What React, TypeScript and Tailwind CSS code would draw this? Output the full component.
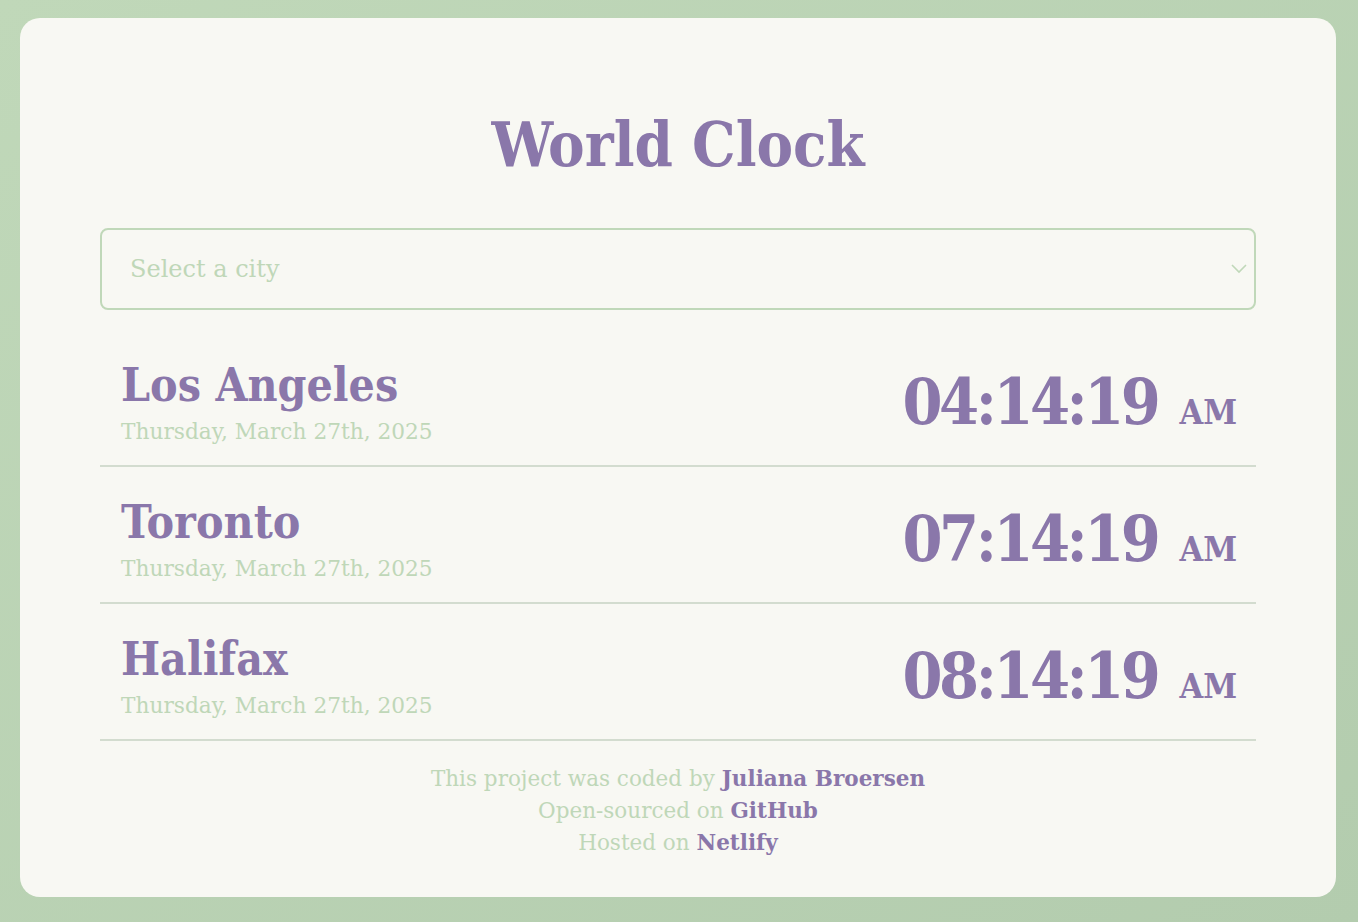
const cities = [
  { name: "Los Angeles", date: "Thursday, March 27th, 2025", time: "04:14:19" },
  { name: "Toronto", date: "Thursday, March 27th, 2025", time: "07:14:19" },
  { name: "Halifax", date: "Thursday, March 27th, 2025", time: "08:14:19" },
];

const slab = { fontFamily: '"DejaVu Serif Condensed", "DejaVu Serif", serif' };
const body = { fontFamily: '"DejaVu Serif", serif' };

export default function App() {
  return (
    <div className="min-h-screen w-full bg-gradient-to-br from-[#c0d8b9] to-[#b3ccae] pl-[20px] pr-[22px] pt-[18px] pb-[25px]">
      <div className="bg-[#f8f8f3] rounded-[20px] px-[80px] pt-[87px] pb-[38px]">
        <h1
          className="text-center text-[#8a77aa] font-bold text-[61px] leading-[80px] mb-[43px]"
          style={slab}
        >
          World Clock
        </h1>
        <div className="relative h-[82px] border-2 border-[#c0d8b9] rounded-[8px] flex items-center px-[28px]">
          <span className="text-[#bfd7b8] text-[24px]" style={body}>
            Select a city
          </span>
          <svg
            className="absolute right-[6px] top-[33px]"
            width="18"
            height="12"
            viewBox="0 0 18 12"
            fill="none"
            stroke="#c0d8b9"
            strokeWidth="1.6"
          >
            <path d="M2 2l7 7 7-7" />
          </svg>
        </div>
        <div className="mt-[20px]">
          {cities.map((c) => (
            <div
              key={c.name}
              className="flex items-center justify-between border-b-2 border-[#d3dccf] h-[137px] pl-[21px] pr-[19px]"
            >
              <div className="mt-[10px]">
                <div className="text-[#8a77aa] font-bold text-[46px] leading-[54px] mt-[-2px]" style={slab}>
                  {c.name}
                </div>
                <div className="text-[#bfd7b8] text-[21.7px] leading-[26px] mt-[7px]" style={body}>
                  {c.date}
                </div>
              </div>
              <div className="flex items-baseline text-[#8a77aa] font-bold mt-[8px]" style={slab}>
                <span className="text-[64px] leading-[80px] tracking-[-3.5px]">{c.time}</span>
                <span className="text-[34px] ml-[22px]">AM</span>
              </div>
            </div>
          ))}
        </div>
        <div className="text-center text-[#bfd7b8] text-[21.5px] leading-[32px] mt-[22px]" style={body}>
          <div>
            This project was coded by{" "}
            <a className="text-[#8a77aa] font-bold" href="#">
              Juliana Broersen
            </a>
          </div>
          <div>
            Open-sourced on{" "}
            <a className="text-[#8a77aa] font-bold" href="#">
              GitHub
            </a>
          </div>
          <div>
            Hosted on{" "}
            <a className="text-[#8a77aa] font-bold" href="#">
              Netlify
            </a>
          </div>
        </div>
      </div>
    </div>
  );
}
